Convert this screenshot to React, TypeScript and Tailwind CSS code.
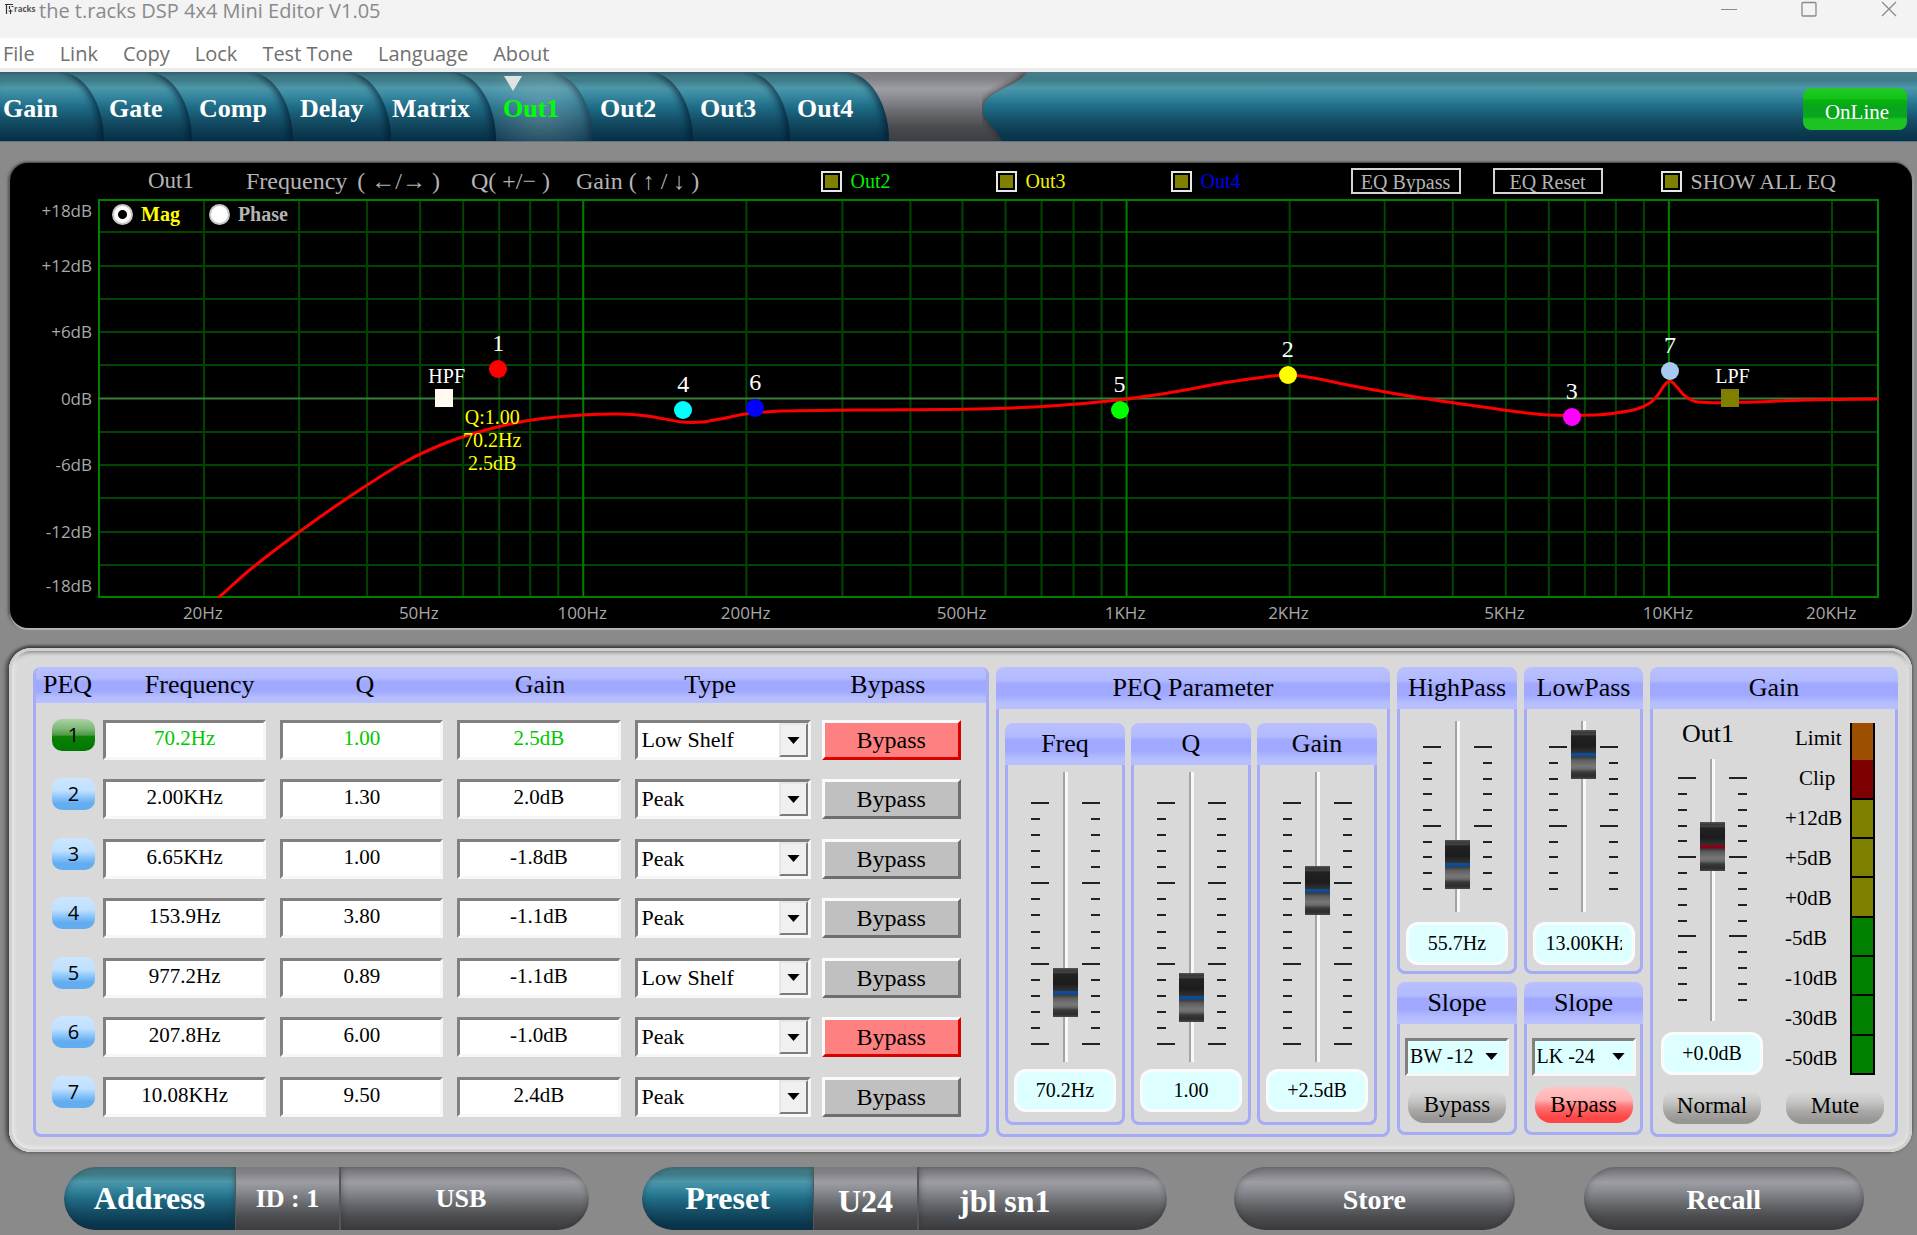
import type { ReactNode } from "react";
import clsx from "clsx";

const MENU = ["File", "Link", "Copy", "Lock", "Test Tone", "Language", "About"];

const TABS = [
  { name: "Gain", size: "z-[9] w-[104px] pl-[3px]" },
  { name: "Gate", size: "z-[8] w-[133px] -ml-[45px] pl-[50px]" },
  { name: "Comp", size: "z-[7] w-[146px] -ml-[45px] pl-[52px]" },
  { name: "Delay", size: "z-[6] w-[143px] -ml-[45px] pl-[52px]" },
  { name: "Matrix", size: "z-[5] w-[150px] -ml-[45px] pl-[46px]" },
  { name: "Out1", size: "z-[4] w-[142px] -ml-[45px] pl-[52px]" },
  { name: "Out2", size: "z-[3] w-[145px] -ml-[45px] pl-[52px]" },
  { name: "Out3", size: "z-[2] w-[142px] -ml-[45px] pl-[52px]" },
  { name: "Out4", size: "z-[1] w-[144px] -ml-[45px] pl-[52px]" },
];

const TEAL =
  "bg-[linear-gradient(#457e87_0%,#3f7c89_12%,#4c97a9_23%,#3a8aa2_33%,#1f6d87_50%,#154f67_70%,#0b3a51_88%,#07334a_100%)]";
const STEEL =
  "bg-[linear-gradient(#7c7c7f_0%,#838387_10%,#9d9ea3_24%,#8a8b90_38%,#66676b_60%,#4a4b4f_80%,#3d3d42_100%)]";
const LILAC = "bg-[linear-gradient(#b8c0ff_0%,#b3bbff_32%,#a0a8ff_40%,#a0a8ff_66%,#b5bdff_85%,#b8c0ff_100%)]";

// Graph area, in its own units: 12 rows of 3dB, three decades of frequency
const GRAPH_W = 1780;
const GRAPH_H = 399;
const HZ100 = 485;
const DECADE = 542.5;

const xOf = (hz: number) => HZ100 + (Math.log10(hz) - 2) * DECADE;
const left = (x: number) => `${(x / GRAPH_W) * 100}%`;

const GRID_HZ = [
  20, 30, 40, 50, 60, 70, 80, 90, 100, 200, 300, 400, 500, 600, 700, 800, 900, 1000, 2000, 3000, 4000, 5000,
  6000, 7000, 8000, 9000, 10000, 20000,
];
const MAJOR_HZ = [100, 1000, 10000];

const HZ_LABELS = [
  { hz: 20, text: "20Hz" },
  { hz: 50, text: "50Hz" },
  { hz: 100, text: "100Hz" },
  { hz: 200, text: "200Hz" },
  { hz: 500, text: "500Hz" },
  { hz: 1000, text: "1KHz" },
  { hz: 2000, text: "2KHz" },
  { hz: 5000, text: "5KHz" },
  { hz: 10000, text: "10KHz" },
  { hz: 20000, text: "20KHz" },
];

const DB_LABELS = ["+18dB", "+12dB", "+6dB", "0dB", "-6dB", "-12dB", "-18dB"];

const CURVE: [number, number][] = [
  [120, 399], [154, 369], [201, 333], [248, 300], [303, 265], [350, 243], [399, 228], [440, 220], [484, 216],
  [520, 215], [549, 217], [584, 223], [604, 223], [622, 220], [647, 215], [683, 212], [757, 211], [879, 210],
  [952, 207], [1020, 201], [1075, 193], [1124, 184], [1166, 178], [1189, 176], [1215, 179], [1249, 186],
  [1287, 193], [1329, 200], [1370, 206], [1412, 212], [1450, 216], [1496, 216], [1517, 214], [1538, 210],
  [1551, 204], [1559, 196], [1565, 187], [1571, 182], [1578, 188], [1586, 197], [1599, 203], [1655, 203],
  [1706, 201], [1780, 200],
];

function smooth(p: [number, number][]) {
  let d = `M${p[0][0]} ${p[0][1]}`;
  for (let i = 0; i < p.length - 1; i++) {
    const a = p[Math.max(i - 1, 0)];
    const b = p[i];
    const c = p[i + 1];
    const e = p[Math.min(i + 2, p.length - 1)];
    // tangents are limited to the step width so that uneven points do not overshoot
    const step = c[0] - b[0];
    const m1 = (c[1] - a[1]) / (c[0] - a[0] || 1);
    const m2 = (e[1] - b[1]) / (e[0] - b[0] || 1);
    d += `C${b[0] + step / 3} ${b[1] + (m1 * step) / 3} ${c[0] - step / 3} ${c[1] - (m2 * step) / 3} ${c[0]} ${c[1]}`;
  }
  return d;
}

const MARKERS = [
  { label: "HPF", x: 346, y: 199, shape: "bg-[#fffaf0]" },
  { label: "1", x: 400, y: 170, shape: "rounded-full bg-[#ff0000]" },
  { label: "4", x: 585, y: 211, shape: "rounded-full bg-[#00ffff]" },
  { label: "6", x: 657, y: 209, shape: "rounded-full bg-[#0000ff]" },
  { label: "5", x: 1021, y: 211, shape: "rounded-full bg-[#00ff00]" },
  { label: "2", x: 1189, y: 176, shape: "rounded-full bg-[#ffff00]" },
  { label: "3", x: 1473, y: 218, shape: "rounded-full bg-[#ff00ff]" },
  { label: "7", x: 1571, y: 172, shape: "rounded-full bg-[#a6caf0]" },
  { label: "LPF", x: 1631, y: 199, shape: "bg-[#808000]" },
];

const BANDS = [
  { freq: "70.2Hz", q: "1.00", gain: "2.5dB", type: "Low Shelf", bypass: true },
  { freq: "2.00KHz", q: "1.30", gain: "2.0dB", type: "Peak", bypass: false },
  { freq: "6.65KHz", q: "1.00", gain: "-1.8dB", type: "Peak", bypass: false },
  { freq: "153.9Hz", q: "3.80", gain: "-1.1dB", type: "Peak", bypass: false },
  { freq: "977.2Hz", q: "0.89", gain: "-1.1dB", type: "Low Shelf", bypass: false },
  { freq: "207.8Hz", q: "6.00", gain: "-1.0dB", type: "Peak", bypass: true },
  { freq: "10.08KHz", q: "9.50", gain: "2.4dB", type: "Peak", bypass: false },
];

const METER = [
  { label: "Limit", color: "bg-[#9c4f00]" },
  { label: "Clip", color: "bg-[#7f0000] border-b-2" },
  { label: "+12dB", color: "bg-[#7f7f00] border-b-2" },
  { label: "+5dB", color: "bg-[#7f7f00] border-b-2" },
  { label: "+0dB", color: "bg-[#7f7f00] border-b-2" },
  { label: "-5dB", color: "bg-[#007f00] border-b-2" },
  { label: "-10dB", color: "bg-[#007f00] border-b-2" },
  { label: "-30dB", color: "bg-[#007f00] border-b-2" },
  { label: "-50dB", color: "bg-[#007f00] border-b-2" },
];

const SUNKEN = "border-[3px] border-t-[#808080] border-l-[#808080] border-r-[#f7f7f7] border-b-[#f7f7f7]";

function Panel({ title, className, children }: { title: string; className?: string; children: ReactNode }) {
  return (
    <section className={clsx("flex flex-col", className)}>
      <h2 className={clsx("flex h-[42px] items-center justify-center rounded-t-lg pb-[2px] text-[26px]", LILAC)}>
        {title}
      </h2>
      <div className="flex-1 rounded-b-lg border-[3px] border-t-0 border-[#a5abf5]">{children}</div>
    </section>
  );
}

function Ticks({ count, side, className }: { count: number; side: "left" | "right"; className: string }) {
  return (
    <div className={clsx("flex w-[18px] flex-col justify-between", side === "right" && "items-end", className)}>
      {Array.from({ length: count }, (_, i) => (
        <span key={i} className={clsx("h-[2px] bg-[#222]", i % 5 === 0 ? "w-[18px]" : "w-[9px]")} />
      ))}
    </div>
  );
}

interface FaderProps {
  label: string;
  value: number;
  ticks: number;
  height: string;
  scale: string;
  red?: boolean;
}

function Fader({ label, value, ticks, height, scale, red }: FaderProps) {
  return (
    <div className="flex justify-center gap-1">
      <Ticks count={ticks} side="left" className={scale} />
      <input
        type="range"
        aria-label={label}
        min={0}
        max={1000}
        defaultValue={value}
        className={clsx(
          "m-0 w-[25px] appearance-none bg-[linear-gradient(90deg,#a3a3a8_2px,#f8f8f8_2px)] bg-[length:5px_100%] bg-center bg-no-repeat [direction:rtl] [writing-mode:vertical-lr]",
          "[&::-webkit-slider-thumb]:h-[49px] [&::-webkit-slider-thumb]:w-[25px] [&::-webkit-slider-thumb]:appearance-none",
          red
            ? "[&::-webkit-slider-thumb]:bg-[linear-gradient(#555_0px,#333_3px,#4a4a4a_4px,#222_6px,#1c1c1c_16px,#333_23px,#8a0014_23px,#8a0014_26px,#3a3a3a_27px,#5c5c5c_30px,#777_36px,#6a6a6a_39px,#3a3a3a_42px,#2c2c2c_46px,#484848_49px)]"
            : "[&::-webkit-slider-thumb]:bg-[linear-gradient(#555_0px,#333_3px,#4a4a4a_4px,#222_6px,#1c1c1c_16px,#333_23px,#0c4c98_23px,#0c4c98_26px,#3a3a3a_27px,#5c5c5c_30px,#777_36px,#6a6a6a_39px,#3a3a3a_42px,#2c2c2c_46px,#484848_49px)]",
          height,
        )}
      />
      <Ticks count={ticks} side="right" className={scale} />
    </div>
  );
}

function Readout({ label, value }: { label: string; value: string }) {
  return (
    <input
      aria-label={label}
      defaultValue={value}
      className="mx-auto block h-[43px] w-[102px] rounded-xl border-[3px] border-[#f8fcfc] bg-[#deffff] px-[10px] text-center text-[20px]"
    />
  );
}

function PillButton({ children, red }: { children: ReactNode; red?: boolean }) {
  return (
    <button
      className={clsx(
        "mx-auto block h-9 w-[98px] rounded-[16px] text-[23px] leading-9",
        red
          ? "bg-[linear-gradient(#ffc4c4_0%,#ffb4b4_35%,#ff7474_55%,#fd4646_85%,#fd4646_100%)]"
          : "bg-[linear-gradient(#d9d9d9_10%,#c4c4c2_40%,#a9a8a6_65%,#989694_90%)]",
      )}
    >
      {children}
    </button>
  );
}

function Triangle({ className }: { className?: string }) {
  return (
    <svg viewBox="0 0 14 8" className={clsx("h-[7px] w-[13px]", className)} aria-hidden="true">
      <path d="M0 0H14L7 8Z" fill="currentColor" />
    </svg>
  );
}

function OliveCheck({ label, className }: { label: string; className: string }) {
  return (
    <label className={clsx("flex items-center gap-[9px]", className)}>
      <input
        type="checkbox"
        className="size-[21px] appearance-none border-2 border-[#e8e8e8] bg-[#808000] shadow-[inset_0_0_0_2px_#000]"
      />
      {label}
    </label>
  );
}

function ModeRadio({ label, checked, className }: { label: string; checked?: boolean; className: string }) {
  return (
    <label className={clsx("flex items-center gap-2 text-[20px] font-bold", className)}>
      <input
        type="radio"
        name="mode"
        defaultChecked={checked}
        className="size-[21px] appearance-none rounded-full border-2 border-[#c8c8c8] bg-white checked:bg-[radial-gradient(circle,#000_4px,#fff_5px)]"
      />
      {label}
    </label>
  );
}

function TitleBar() {
  return (
    <header className="flex h-[38px] items-start justify-between bg-[#f3f3f3] pl-[5px] pr-5 font-['Open_Sans',sans-serif] text-[#8a8a8a]">
      <div className="flex items-start gap-[6px]">
        <div className="flex w-7 items-center pt-[3px] text-[8px] leading-[12px] font-bold text-[#555]">
          <svg viewBox="0 0 9 12" className="h-3 w-[9px] flex-none" fill="none" stroke="#333" aria-hidden="true">
            <path d="M0 1.500H8M1.500 1V11M4.500 3V6M6.500 3.500H8.500M3.500 8H7.500M5.500 6.500V11" strokeWidth="1.200" />
          </svg>
          racks
        </div>
        <h1 className="text-[20px] leading-[22px]">the t.racks DSP 4x4 Mini Editor V1.05</h1>
      </div>
      <div className="flex gap-[64px] pt-px">
        <button aria-label="Minimize">
          <svg viewBox="0 0 16 16" className="size-4" fill="none" stroke="currentColor">
            <path d="M0 8.500H16" />
          </svg>
        </button>
        <button aria-label="Maximize">
          <svg viewBox="0 0 16 16" className="size-4" fill="none" stroke="currentColor" strokeWidth="1.300">
            <rect x="1" y="1.500" width="14" height="13.500" rx="1" />
          </svg>
        </button>
        <button aria-label="Close">
          <svg viewBox="0 0 16 16" className="size-4" fill="none" stroke="currentColor" strokeWidth="1.300">
            <path d="M1 1L15 15M15 1L1 15" />
          </svg>
        </button>
      </div>
    </header>
  );
}

function TabBar() {
  return (
    <nav className={clsx("flex h-[70px] overflow-hidden border-b border-[#5f7780]", STEEL)}>
      <div className="isolate flex">
        {TABS.map((tab) => (
          <button
            key={tab.name}
            className={clsx(
              "relative rounded-tr-[45px_70px] pt-[3px] text-left text-[26px] font-bold shadow-[inset_-5px_1px_6px_-1px_rgba(2,22,42,0.6)]",
              TEAL,
              tab.size,
              tab.name === "Out1" ? "text-[#00ff00]" : "text-white",
            )}
          >
            {tab.name === "Out1" && (
              <>
                <span className="absolute inset-0 rounded-tr-[45px_70px] bg-[radial-gradient(circle_at_65%_55%,rgba(160,190,200,0.4),rgba(160,190,200,0.08)_60px)]" />
                <svg viewBox="0 0 18 15" className="absolute left-[53px] top-1 h-[15px] w-[18px]" aria-hidden="true">
                  <path d="M0 0H18L9 15Z" fill="#e2e2e2" />
                </svg>
              </>
            )}
            <span className="relative">{tab.name}</span>
          </button>
        ))}
      </div>
      <svg
        viewBox="0 0 46 70"
        preserveAspectRatio="none"
        className="ml-[93px] h-[69px] w-[46px] flex-none"
        aria-hidden="true"
      >
        <defs>
          <linearGradient id="teal" x1="0" y1="0" x2="0" y2="70" gradientUnits="userSpaceOnUse">
            <stop offset="0" stopColor="#457e87" />
            <stop offset="0.120" stopColor="#3f7c89" />
            <stop offset="0.230" stopColor="#4c97a9" />
            <stop offset="0.330" stopColor="#3a8aa2" />
            <stop offset="0.500" stopColor="#1f6d87" />
            <stop offset="0.700" stopColor="#154f67" />
            <stop offset="0.880" stopColor="#0b3a51" />
            <stop offset="1" stopColor="#07334a" />
          </linearGradient>
          <filter id="soft" x="-30%" y="-10%" width="160%" height="120%">
            <feGaussianBlur stdDeviation="3" />
          </filter>
        </defs>
        <path d="M43 0C30 16 0 20 0 38C0 50 14 56 20 70H46V0Z" fill="#1a1a1c" opacity="0.7" filter="url(#soft)" />
        <path d="M46 0C32 17 1 20 1 38C1 50 15 57 20 70H46Z" fill="url(#teal)" />
      </svg>
      <div className={clsx("flex flex-1 items-start justify-end pr-[10px] pt-4", TEAL)}>
        <button className="h-[42px] w-[104px] rounded-lg bg-[linear-gradient(#1fcb24_0%,#14c218_25%,#04b50c_30%,#09a51c_45%,#09a51c_68%,#1cc322_75%,#1cc322_100%)] pt-[6px] pl-1 text-[21px] leading-6 text-white">
          OnLine
        </button>
      </div>
    </nav>
  );
}

function EqGraph() {
  return (
    <section className="rounded-[18px] bg-black pr-[33px] shadow-[0_2px_1px_#b5b5b5,0_-1px_2px_#444,-2px_0_3px_#555,2px_0_1px_#a8a8a8]">
      <div className="flex h-9 items-center pl-[138px] text-[24px] text-[#b4b4b4]">
        <span className="text-[23px]">Out1</span>
        <span className="ml-[52px]">Frequency</span>
        <span className="ml-[10px]">( ←/→ )</span>
        <span className="ml-[31px]">Q( +/− )</span>
        <span className="ml-[26px]">Gain ( ↑ / ↓ )</span>
        <div className="ml-auto flex items-center text-[20px]">
          <OliveCheck label="Out2" className="text-[#00ee00]" />
          <OliveCheck label="Out3" className="ml-[105px] text-[#f0f000]" />
          <OliveCheck label="Out4" className="ml-[105px] text-[#0000f0]" />
          <button className="ml-[110px] h-[26px] w-[110px] border-2 border-[#d5d5d5] leading-[24px]">EQ Bypass</button>
          <button className="ml-8 h-[26px] w-[110px] border-2 border-[#d5d5d5] leading-[24px]">EQ Reset</button>
          <OliveCheck label="SHOW ALL EQ" className="ml-[58px] mr-[43px] text-[22px]" />
        </div>
      </div>

      <div className="flex">
        <div className="grid h-[399px] w-[88px] grid-rows-[1fr_2fr_2fr_2fr_2fr_2fr_1fr] items-center pr-[6px] text-right font-['Open_Sans',sans-serif] text-[17px] leading-6 text-[#a8a8a8]">
          {DB_LABELS.map((label) => (
            <span key={label} className="first:self-start last:self-end">
              {label}
            </span>
          ))}
        </div>

        <div className="flex-1">
          <div className="relative h-[399px]">
            <svg
              viewBox={`0 0 ${GRAPH_W} ${GRAPH_H}`}
              preserveAspectRatio="none"
              className="block h-full w-full"
              fill="none"
            >
              <g stroke="#004600" strokeWidth="2">
                {GRID_HZ.filter((hz) => !MAJOR_HZ.includes(hz)).map((hz) => (
                  <path key={hz} d={`M${Math.round(xOf(hz))} 0V${GRAPH_H}`} />
                ))}
                {[1, 2, 3, 4, 5, 7, 8, 9, 10, 11].map((row) => (
                  <path key={row} d={`M0 ${Math.round((row * GRAPH_H) / 12)}H${GRAPH_W}`} />
                ))}
              </g>
              <g stroke="#008000" strokeWidth="2">
                {MAJOR_HZ.map((hz) => (
                  <path key={hz} d={`M${Math.round(xOf(hz))} 0V${GRAPH_H}`} />
                ))}
                <rect x="1" y="1" width={GRAPH_W - 2} height={GRAPH_H - 2} />
              </g>
              <path d={`M0 199.500H${GRAPH_W}`} stroke="#3c7c3c" strokeWidth="2" />
              <path d={smooth(CURVE)} stroke="#ff0000" strokeWidth="3" />
            </svg>

            <div className="absolute left-[14px] top-0 flex gap-[29px]">
              <ModeRadio label="Mag" checked className="text-[#ffff00]" />
              <ModeRadio label="Phase" className="text-[#b4b4b4]" />
            </div>

            {MARKERS.map((m) => (
              <div
                key={m.label}
                className="absolute flex w-10 -translate-x-1/2 -translate-y-[35px] flex-col items-center text-white"
                style={{ left: left(m.x), top: m.y }}
              >
                <span
                  className={clsx(
                    "h-[26px]",
                    m.label.length > 1 ? "pl-[5px] text-[20px] leading-[26px]" : "text-[24px] leading-[18px]",
                  )}
                >
                  {m.label}
                </span>
                <span className={clsx("size-[18px]", m.shape)} />
              </div>
            ))}

            <div
              className="absolute top-[207px] -translate-x-1/2 text-center text-[20px] leading-[23px] text-[#ffff00]"
              style={{ left: left(394) }}
            >
              <p>Q:1.00</p>
              <p>70.2Hz</p>
              <p>2.5dB</p>
            </div>
          </div>

          <div className="relative h-[30px] font-['Open_Sans',sans-serif] text-[17px] leading-[30px] text-[#a8a8a8]">
            {HZ_LABELS.map(({ hz, text }) => (
              <span key={text} className="absolute -translate-x-1/2" style={{ left: left(xOf(hz) - 1) }}>
                {text}
              </span>
            ))}
          </div>
        </div>
      </div>
    </section>
  );
}

function BandTable() {
  return (
    <div className="overflow-hidden rounded-lg border-[3px] border-t-0 border-[#a5abf5]">
      <table className="h-[452px] w-full table-fixed">
        <colgroup>
          <col className="w-[67px]" />
          <col className="w-[177px]" />
          <col className="w-[177px]" />
          <col className="w-[177px]" />
          <col className="w-[187px]" />
          <col className="w-[164px]" />
        </colgroup>
        <thead>
          <tr className={clsx("h-9 text-[26px] leading-9 [&>th]:p-0 [&>th]:font-normal", LILAC)}>
            <th scope="col"><span className="pr-1">PEQ</span></th>
            <th scope="col"><span className="pl-4">Frequency</span></th>
            <th scope="col"><span className="pr-2">Q</span></th>
            <th scope="col"><span className="pr-3">Gain</span></th>
            <th scope="col"><span className="pr-9">Type</span></th>
            <th scope="col"><span className="pr-8">Bypass</span></th>
          </tr>
        </thead>
        <tbody>
          {BANDS.map((band, i) => (
            <tr key={i} className="[&>td]:px-0 [&>td]:pt-[17px] [&>td]:pb-0 [&>td]:align-top">
              <td>
                <button
                  className={clsx(
                    "-mt-px ml-4 block h-8 w-[43px] rounded-[10px] font-['Open_Sans',sans-serif] text-[20px] leading-8",
                    i === 0
                      ? "bg-[linear-gradient(#a9d3a2_0%,#7fb878_30%,#4c9a44_50%,#0d8208_55%,#007500_100%)]"
                      : "bg-[linear-gradient(#cbe6ff_0%,#bfe0ff_40%,#8cc6fb_60%,#62acf0_80%,#62acf0_100%)]",
                  )}
                >
                  {i + 1}
                </button>
              </td>
              {[band.freq, band.q, band.gain].map((value, k) => (
                <td key={k}>
                  <div className="pr-[14px]">
                    <input
                      aria-label={`${["Frequency", "Q", "Gain"][k]} ${i + 1}`}
                      defaultValue={value}
                      className={clsx(
                        "block h-10 w-full bg-white pb-[3px] text-center text-[21px]",
                        SUNKEN,
                        i === 0 && "text-[#00c800]",
                      )}
                    />
                  </div>
                </td>
              ))}
              <td>
                <div className="pr-[11px]">
                  <div className={clsx("relative h-10", SUNKEN)}>
                    <select
                      aria-label={`Type ${i + 1}`}
                      defaultValue={band.type}
                      className="block h-full w-full appearance-none bg-white pb-[2px] pl-1 text-[22px]"
                    >
                      <option>Peak</option>
                      <option>Low Shelf</option>
                      <option>High Shelf</option>
                    </select>
                    <span className="pointer-events-none absolute inset-y-0 right-0 flex w-[29px] items-center justify-center border-2 border-t-[#e6e6e6] border-l-[#e6e6e6] border-r-[#7c7c7c] border-b-[#7c7c7c] bg-[#f0f0f0]">
                      <Triangle />
                    </span>
                  </div>
                </div>
              </td>
              <td>
                <button
                  className={clsx(
                    "block h-10 w-[139px] border-[3px] border-t-[#fafafa] border-l-[#fafafa] text-[24px] leading-[34px]",
                    band.bypass
                      ? "border-r-[#d80000] border-b-[#d80000] bg-[#ff8080]"
                      : "border-r-[#6e6e6e] border-b-[#6e6e6e] bg-[#c0c0c0]",
                  )}
                >
                  Bypass
                </button>
              </td>
            </tr>
          ))}
        </tbody>
      </table>
    </div>
  );
}

function PeqParameter() {
  const faders = [
    { name: "Freq", value: 188, text: "70.2Hz" },
    { name: "Q", value: 166, text: "1.00" },
    { name: "Gain", value: 609, text: "+2.5dB" },
  ];
  return (
    <Panel title="PEQ Parameter">
      <div className="grid grid-cols-3 gap-[6px] pt-[14px] pr-[10px] pb-[9px] pl-[6px]">
        {faders.map((f) => (
          <Panel key={f.name} title={f.name}>
            <div className="pt-[7px] pb-[10px]">
              <Fader label={f.name} value={f.value} ticks={16} height="h-[290px]" scale="mt-[30px] h-[243px]" />
              <div className="mt-[7px]">
                <Readout label={`${f.name} value`} value={f.text} />
              </div>
            </div>
          </Panel>
        ))}
      </div>
    </Panel>
  );
}

interface PassFilterProps {
  title: string;
  level: number;
  freq: string;
  slope: string;
  bypass?: boolean;
}

function PassFilter({ title, level, freq, slope, bypass }: PassFilterProps) {
  return (
    <div className="flex flex-col gap-2">
      <Panel title={title}>
        <div className="pt-3 pb-[6px]">
          <Fader label={title} value={level} ticks={10} height="h-[191px]" scale="mt-[25px] h-[144px]" />
          <div className="mt-[10px]">
            <Readout label={`${title} frequency`} value={freq} />
          </div>
        </div>
      </Panel>
      <Panel title="Slope">
        <div className="pt-[14px] pb-[9px]">
          <div className={clsx("relative mx-auto h-[38px] w-[104px]", SUNKEN)}>
            <select
              aria-label={`${title} slope`}
              defaultValue={slope}
              className="block h-full w-full appearance-none bg-[#deffff] pb-[2px] pl-[2px] text-[20px]"
            >
              <option>BW -12</option>
              <option>LK -24</option>
            </select>
            <Triangle className="pointer-events-none absolute right-2 top-3" />
          </div>
          <div className="mt-[11px]">
            <PillButton red={bypass}>Bypass</PillButton>
          </div>
        </div>
      </Panel>
    </div>
  );
}

function OutputGain() {
  return (
    <Panel title="Gain">
      <div className="flex justify-between pr-[10px] pl-2">
        <div className="w-[102px] pt-[10px]">
          <p className="pr-2 text-center text-[26px] leading-[30px]">Out1</p>
          <div className="mt-[10px]">
            <Fader label="Out1" value={703} ticks={15} height="h-[262px]" scale="mt-[18px] h-[224px]" red />
          </div>
          <div className="mt-[11px]">
            <Readout label="Out1 gain" value="+0.0dB" />
          </div>
          <div className="mt-[13px]">
            <PillButton>Normal</PillButton>
          </div>
        </div>
        <div className="w-[100px] pt-[10px]">
          <div className="flex h-[360px] justify-between pr-[10px]">
            <ul className="flex flex-col text-[21px]">
              {METER.map((m) => (
                <li key={m.label} className="flex h-10 items-center first:pl-[10px] nth-2:pl-[14px]">
                  {m.label}
                </li>
              ))}
            </ul>
            <div className="my-1 flex w-[25px] flex-col border-x-2 border-black">
              {METER.map((m) => (
                <span key={m.label} className={clsx("flex-1 border-black", m.color)} />
              ))}
            </div>
          </div>
          <div className="mt-[9px]">
            <PillButton>Mute</PillButton>
          </div>
        </div>
      </div>
    </Panel>
  );
}

function Footer() {
  const inner = "shadow-[inset_0_0_6px_rgba(40,40,45,0.5)]";
  const seam = "border-l-2 border-[#55565a]";
  return (
    <footer className="mt-[15px] flex h-[63px] gap-[53px] pr-[53px] pl-16 font-bold text-white">
      <div className={clsx("flex flex-[525] overflow-hidden rounded-full", STEEL)}>
        <button className={clsx("w-[171px] rounded-l-full pb-[2px] text-[32px]", TEAL, inner)}>Address</button>
        <span className="flex w-[104px] items-center justify-center border-l border-[#55565a] text-[26px]">ID : 1</span>
        <span className={clsx("flex flex-1 items-center justify-center rounded-r-full pr-2 text-[26px]", seam, inner)}>USB</span>
      </div>
      <div className={clsx("flex flex-[525] overflow-hidden rounded-full", STEEL)}>
        <button className={clsx("w-[171px] rounded-l-full pb-[2px] text-[32px]", TEAL, inner)}>Preset</button>
        <span className="flex w-[104px] items-center justify-center border-l border-[#55565a] pt-1 text-[32px]">U24</span>
        <span className={clsx("flex flex-1 items-center rounded-r-full pt-1 pl-10 text-[32px]", seam, inner)}>jbl sn1</span>
      </div>
      <div className="ml-[14px] flex flex-[630] gap-[69px]">
        <button className={clsx("flex-1 rounded-full pt-[3px] text-[28px]", STEEL, inner)}>Store</button>
        <button className={clsx("flex-1 rounded-full pt-[3px] text-[28px]", STEEL, inner)}>Recall</button>
      </div>
    </footer>
  );
}

export default function App() {
  return (
    <div className="min-h-screen bg-[#8a8a8a] font-['Liberation_Serif',serif] text-black">
      <TitleBar />
      <nav className="flex h-[34px] gap-[25px] border-b-4 border-[#ededed] bg-white pl-[3px] font-['Open_Sans',sans-serif] text-[20px] leading-8 text-[#707070]">
        {MENU.map((item) => (
          <button key={item} className="block h-[30px]">
            {item}
          </button>
        ))}
      </nav>
      <TabBar />
      <main className="pt-[21px] pr-[5px] pl-[10px]">
        <EqGraph />
        <section className="mt-5 -ml-px grid grid-cols-[956fr_394fr_120fr_119fr_248fr] gap-[7px] rounded-[22px] bg-[#d9d9d9] pt-[19px] pr-[14px] pb-[15px] pl-6 shadow-[inset_0_0_0_3px_#d0d0d0,inset_0_-7px_4px_-2px_#ebebeb,inset_7px_0_4px_-2px_#ebebeb,inset_-5px_0_4px_-2px_#ebebeb,inset_0_4px_4px_#777,-3px_0_4px_#444,0_-2px_3px_#333]">
          <BandTable />
          <PeqParameter />
          <PassFilter title="HighPass" level={162} freq="55.7Hz" slope="BW -12" />
          <PassFilter title="LowPass" level={937} freq="13.00KHz" slope="LK -24" bypass />
          <OutputGain />
        </section>
      </main>
      <Footer />
    </div>
  );
}
